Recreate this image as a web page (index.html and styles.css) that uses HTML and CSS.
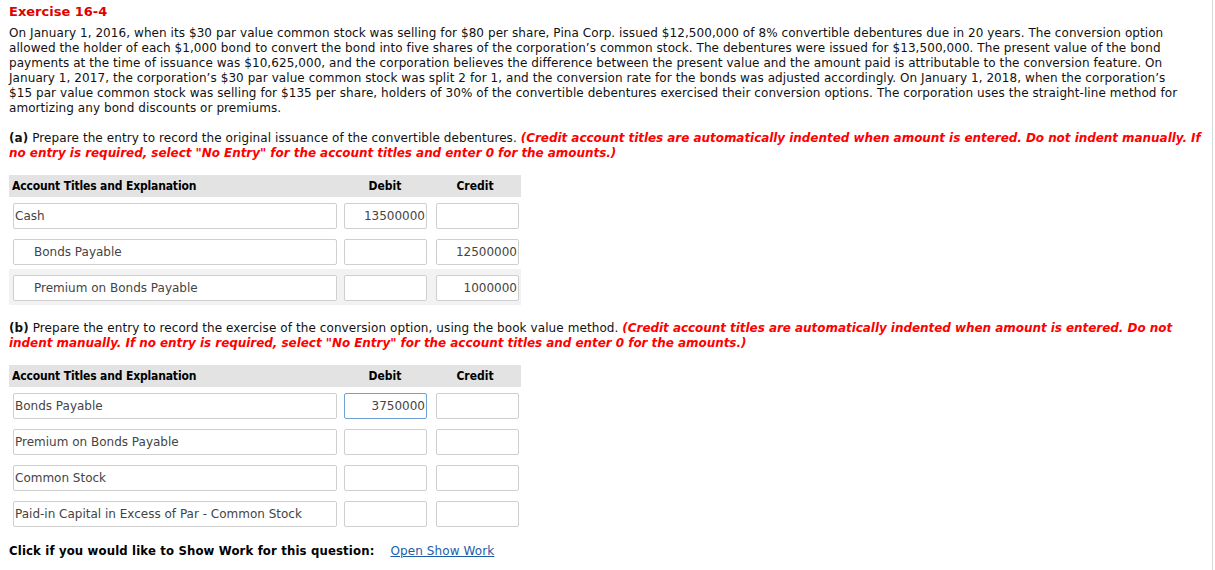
FILE: index.html
```html
<!DOCTYPE html>
<html>
<head>
<meta charset="utf-8">
<link rel="stylesheet" href="styles.css">
</head>
<body>
<div class="page">
  <h1 class="title">Exercise 16-4</h1>
  <p class="problem">On January 1, 2016, when its $30 par value common stock was selling for $80 per share, Pina Corp. issued $12,500,000 of 8% convertible debentures due in 20 years. The conversion option<br>allowed the holder of each $1,000 bond to convert the bond into five shares of the corporation’s common stock. The debentures were issued for $13,500,000. The present value of the bond<br>payments at the time of issuance was $10,625,000, and the corporation believes the difference between the present value and the amount paid is attributable to the conversion feature. On<br>January 1, 2017, the corporation’s $30 par value common stock was split 2 for 1, and the conversion rate for the bonds was adjusted accordingly. On January 1, 2018, when the corporation’s<br>$15 par value common stock was selling for $135 per share, holders of 30% of the convertible debentures exercised their conversion options. The corporation uses the straight-line method for<br>amortizing any bond discounts or premiums.</p>

  <p class="question"><b>(a)</b> Prepare the entry to record the original issuance of the convertible debentures. <em class="note">(Credit account titles are automatically indented when amount is entered. Do not indent manually. If<br>no entry is required, select "No Entry" for the account titles and enter 0 for the amounts.)</em></p>

  <div class="journal">
    <div class="jhead"><span class="h-acct">Account Titles and Explanation</span><span class="h-amt">Debit</span><span class="h-amt">Credit</span></div>
    <div class="jrow"><div class="field acct">Cash</div><div class="field amt">13500000</div><div class="field amt"></div></div>
    <div class="jrow"><div class="field acct indent">Bonds Payable</div><div class="field amt"></div><div class="field amt">12500000</div></div>
    <div class="jrow shaded"><div class="field acct indent">Premium on Bonds Payable</div><div class="field amt"></div><div class="field amt">1000000</div></div>
  </div>

  <p class="question"><b>(b)</b> Prepare the entry to record the exercise of the conversion option, using the book value method. <em class="note">(Credit account titles are automatically indented when amount is entered. Do not<br>indent manually. If no entry is required, select "No Entry" for the account titles and enter 0 for the amounts.)</em></p>

  <div class="journal last">
    <div class="jhead"><span class="h-acct">Account Titles and Explanation</span><span class="h-amt">Debit</span><span class="h-amt">Credit</span></div>
    <div class="jrow"><div class="field acct">Bonds Payable</div><div class="field amt focus">3750000</div><div class="field amt"></div></div>
    <div class="jrow"><div class="field acct">Premium on Bonds Payable</div><div class="field amt"></div><div class="field amt"></div></div>
    <div class="jrow"><div class="field acct">Common Stock</div><div class="field amt"></div><div class="field amt"></div></div>
    <div class="jrow"><div class="field acct">Paid-in Capital in Excess of Par - Common Stock</div><div class="field amt"></div><div class="field amt"></div></div>
  </div>

  <p class="showwork"><b>Click if you would like to Show Work for this question:</b><a href="#" class="link">Open Show Work</a></p>
</div>
</body>
</html>
```

FILE: styles.css
```css
html, body {
  margin: 0;
  padding: 0;
  background: #fff;
}
body {
  font-family: "DejaVu Sans", Verdana, sans-serif;
  font-size: 12px;
  color: #111;
}
.page {
  width: 1213px;
  height: 570px;
  box-sizing: border-box;
  padding: 4px 0 0 9px;
  border-right: 1px solid #d8d8d8;
}
.title {
  margin: 0;
  font-size: 13px;
  line-height: 16px;
  font-weight: bold;
  color: #e00000;
}
.problem {
  margin: 6px 0 0;
  line-height: 15px;
  white-space: nowrap;
  letter-spacing: 0.07px;
}
.question {
  margin: 15px 0 0;
  line-height: 15px;
  white-space: nowrap;
  letter-spacing: 0.09px;
}
.note {
  color: #ff0000;
  font-weight: bold;
  font-style: italic;
  letter-spacing: -0.05px;
}
.journal {
  width: 512px;
  margin: 14px 0 16px;
}
.journal.last {
  margin-bottom: 0;
}
.jhead {
  display: flex;
  align-items: center;
  height: 22px;
  background: #e3e3e3;
  font-family: "DejaVu Sans Condensed", "DejaVu Sans", sans-serif;
  font-weight: bold;
  font-size: 12px;
  color: #000;
}
.h-acct {
  width: 331px;
  padding-left: 3px;
  box-sizing: border-box;
  letter-spacing: -0.15px;
}
.h-amt {
  width: 90px;
  text-align: center;
}
.jrow {
  display: flex;
  gap: 7px;
  padding: 6px 2px 4px 4px;
}
.jrow .amt:last-child {
  margin-left: 2px;
}
.shaded {
  background: #f2f2f2;
}
.field {
  box-sizing: border-box;
  height: 26px;
  border: 1px solid #cfcfcf;
  border-radius: 2px;
  background: #fff;
  font-size: 12px;
  line-height: 24px;
  color: #444;
  white-space: nowrap;
  overflow: hidden;
}
.acct {
  width: 324px;
  padding-left: 1px;
}
.indent {
  padding-left: 20px;
}
.amt {
  width: 83px;
  text-align: right;
  padding-right: 1px;
}
.focus {
  border-color: #6fa3d8;
}
.showwork {
  margin: 12px 0 0;
  line-height: 15px;
  font-size: 12px;
}
.showwork b {
  font-family: "DejaVu Sans Condensed", "DejaVu Sans", sans-serif;
  font-size: 13px;
  letter-spacing: 0.15px;
  color: #000;
}
.link {
  margin-left: 16px;
  color: #1b5ea6;
  text-decoration: underline;
  letter-spacing: 0.1px;
}
```
